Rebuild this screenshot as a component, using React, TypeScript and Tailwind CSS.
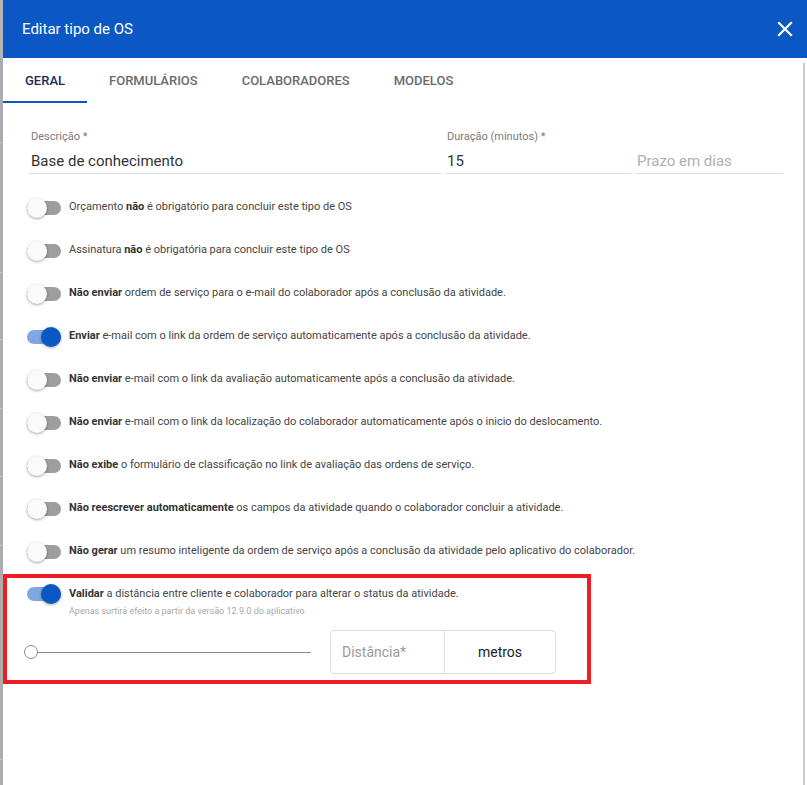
import React from 'react';

type Row = { on?: boolean; bold: string; before?: string; after: string };

const rows: Row[] = [
  { before: 'Orçamento ', bold: 'não', after: ' é obrigatório para concluir este tipo de OS' },
  { before: 'Assinatura ', bold: 'não', after: ' é obrigatória para concluir este tipo de OS' },
  { bold: 'Não enviar', after: ' ordem de serviço para o e-mail do colaborador após a conclusão da atividade.' },
  { on: true, bold: 'Enviar', after: ' e-mail com o link da ordem de serviço automaticamente após a conclusão da atividade.' },
  { bold: 'Não enviar', after: ' e-mail com o link da avaliação automaticamente após a conclusão da atividade.' },
  { bold: 'Não enviar', after: ' e-mail com o link da localização do colaborador automaticamente após o inicio do deslocamento.' },
  { bold: 'Não exibe', after: ' o formulário de classificação no link de avaliação das ordens de serviço.' },
  { bold: 'Não reescrever automaticamente', after: ' os campos da atividade quando o colaborador concluir a atividade.' },
  { bold: 'Não gerar', after: ' um resumo inteligente da ordem de serviço após a conclusão da atividade pelo aplicativo do colaborador.' },
];

const Switch: React.FC<{ on?: boolean }> = ({ on }) => (
  <div className="relative h-[20px] w-[34px] shrink-0">
    <div className={`absolute left-0 top-[3px] h-[14px] w-[34px] rounded-full ${on ? 'bg-[#7fa7e1]' : 'bg-[#9e9e9e]'}`}></div>
    <div
      className={`absolute top-0 h-[20px] w-[20px] rounded-full shadow-[0_1px_3px_rgba(0,0,0,0.35)] ${
        on ? 'left-[14px] bg-[#0b57c3]' : 'left-0 bg-[#fafafa]'
      }`}
    ></div>
  </div>
);

const Field: React.FC<{ label?: string; value?: string; placeholder?: string; className: string }> = ({
  label,
  value,
  placeholder,
  className,
}) => (
  <div className={className}>
    <div className="h-4 pl-[2px] text-[11px] leading-4 text-[#7a7a7a]">{label}</div>
    <div className="border-b border-[#dcdcdc] pl-[2px] pt-[4px] text-[15px] leading-6">
      {value ? <span className="text-[#333]">{value}</span> : <span className="text-[#b0b0b0]">{placeholder}</span>}
    </div>
  </div>
);

export default function App() {
  return (
    <div className="flex h-[785px] w-[807px] overflow-hidden bg-white" style={{ fontFamily: 'Roboto, "Liberation Sans", sans-serif' }}>
      {/* page behind the dialog */}
      <div className="flex w-[3px] shrink-0 flex-col bg-[#adadad]">
        <div className="h-[58px] bg-[#b4b4b4]"></div>
        <div className="h-[85px] border-b border-[#c4c4c4] bg-[#a9acb3]"></div>
        <div className="h-[130px] border-b border-[#c4c4c4]"></div>
        <div className="h-[67px] border-b border-[#c4c4c4]"></div>
        <div className="h-[69px] border-b border-[#c4c4c4]"></div>
        <div className="h-[68px] border-b border-[#c4c4c4]"></div>
        <div className="h-[69px] border-b border-[#c4c4c4]"></div>
        <div className="h-[214px] border-b border-[#c4c4c4]"></div>
      </div>

      <div className="flex min-w-0 flex-1 flex-col">
        <div className="flex h-[58px] shrink-0 items-center justify-between bg-[#0b57c3] pl-[19px] pr-[14px]">
          <span className="text-[15px] text-white">Editar tipo de OS</span>
          <svg width="16" height="16" viewBox="0 0 16 16" fill="none" stroke="white" strokeWidth="2.2" strokeLinecap="square">
            <path d="M2 2 L14 14 M14 2 L2 14" />
          </svg>
        </div>

        <div className="flex min-h-0 flex-1">
          <div className="min-w-0 flex-1">
            <div className="flex h-[45px] text-[13px] font-medium uppercase">
              <div className="flex items-center border-b-2 border-[#0b57c3] px-[22px] pt-[2px] text-[#1d2b55]">GERAL</div>
              <div className="flex items-center px-[22px] text-[#6b6b6b]">FORMULÁRIOS</div>
              <div className="flex items-center px-[22px] text-[#6b6b6b]">COLABORADORES</div>
              <div className="flex items-center px-[22px] text-[#6b6b6b]">MODELOS</div>
            </div>

            <div className="pl-[24px] pt-[26px]">
              <div className="ml-[2px] flex gap-[4px]">
                <Field className="w-[412px]" label="Descrição *" value="Base de conhecimento" />
                <Field className="w-[186px]" label="Duração (minutos) *" value="15" />
                <Field className="w-[148px]" placeholder="Prazo em dias" />
              </div>

              <div className="mt-[12px]">
                {rows.map((r, i) => (
                  <div key={i} className="flex h-[43px] items-center">
                    <Switch on={r.on} />
                    <span className="ml-[8px] whitespace-nowrap text-[11px] text-[#444]">
                      {r.before}
                      <b className="font-bold text-[#333]">{r.bold}</b>
                      {r.after}
                    </span>
                  </div>
                ))}
              </div>

              <div className="-ml-[24px] mt-[1px] h-[110px] w-[588px] border-4 border-[#ec1d25] pl-[20px] pt-[8px]">
                <div className="flex items-start">
                  <div className="-mt-[2px]">
                    <Switch on />
                  </div>
                  <div className="ml-[8px]">
                    <div className="text-[11px] leading-4 text-[#444]">
                      <b className="font-bold text-[#333]">Validar</b> a distância entre cliente e colaborador para alterar o status da atividade.
                    </div>
                    <div className="mt-[2px] text-[9px] leading-[14px] text-[#a8a8a8]">
                      Apenas surtirá efeito a partir da versão 12.9.0 do aplicativo
                    </div>
                  </div>
                </div>

                <div className="-ml-[3px] mt-[12px] flex items-center">
                  <div className="flex w-[287px] items-center">
                    <div className="h-[14px] w-[14px] shrink-0 rounded-full border-[1.5px] border-[#8a8a8a] bg-white"></div>
                    <div className="h-px flex-1 bg-[#8a8a8a]"></div>
                  </div>
                  <div className="ml-[19px] flex h-[44px] w-[226px] rounded-[4px] border border-[#dedede] text-[14px]">
                    <div className="flex w-[114px] items-center border-r border-[#dedede] pl-[11px] text-[#9a9a9a]">Distância*</div>
                    <div className="flex flex-1 items-center justify-center text-[#222]">metros</div>
                  </div>
                </div>
              </div>
            </div>
          </div>
          <div className="mr-[2px] mt-[5px] w-[2px] shrink-0 bg-[#c9c9c9]"></div>
        </div>
      </div>
    </div>
  );
}
